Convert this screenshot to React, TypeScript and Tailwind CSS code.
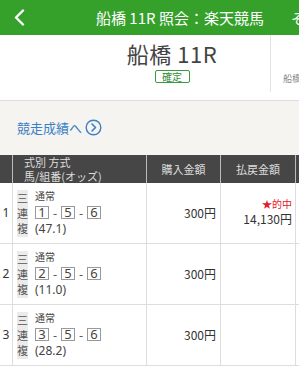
import React from "react";

const font = { fontFamily: '"Noto Sans CJK JP", "Noto Sans", sans-serif' };
const digit = { fontFamily: '"Noto Sans", "Noto Sans CJK JP", sans-serif' };

function NumBox({ n }: { n: string }) {
  return (
    <span
      className="inline-flex items-center justify-center w-[14px] h-[13px] border border-[#999] text-[13px] leading-[11px] text-[#444] bg-white"
      style={digit}
    >
      {n}
    </span>
  );
}

function Row({ idx, nums, odds, hit }: { idx: string; nums: string[]; odds: string; hit?: boolean }) {
  return (
    <div className="flex h-[61px] border-b border-[#ddd] bg-white">
      <div className="w-[13px] shrink-0 border-r border-[#ddd] flex items-center justify-center text-[12px] leading-[14px] text-[#333]" style={digit}>
        {idx}
      </div>
      <div className="w-[134px] shrink-0 border-r border-[#ddd] flex items-center pl-[4px]">
        <div className="w-[11px] bg-[#ebebeb] flex flex-col items-center text-[11px] leading-[15px] text-[#555] py-[1px]">
          <span className="block">三</span>
          <span className="block">連</span>
          <span className="block">複</span>
        </div>
        <div className="ml-[7px] flex flex-col">
          <span className="block text-[10px] leading-[12px] text-[#444]">通常</span>
          <div className="flex items-center mt-[4px] text-[12px] leading-[13px] text-[#444]">
            <NumBox n={nums[0]} />
            <span className="block w-[12px] text-center">-</span>
            <NumBox n={nums[1]} />
            <span className="block w-[12px] text-center">-</span>
            <NumBox n={nums[2]} />
          </div>
          <span className="block text-[12px] leading-[14px] mt-[3px] text-[#444]" style={digit}>{odds}</span>
        </div>
      </div>
      <div className="w-[74px] shrink-0 border-r border-[#ddd] flex items-center justify-end pr-[4px] text-[12px] leading-[14px] text-[#333]">
        300円
      </div>
      <div className="w-[75px] shrink-0 border-r border-[#ddd] flex flex-col items-end justify-center pr-[3px] pb-[2px]">
        {hit && (
          <>
            <span className="block text-[10px] leading-[14px] text-[#e0202a]">★的中</span>
            <span className="block text-[12px] leading-[16px] text-[#333]">14,130円</span>
          </>
        )}
      </div>
      <div className="w-[20px] shrink-0" />
    </div>
  );
}

export default function App() {
  return (
    <div className="w-[299px] h-[367px] overflow-hidden bg-white" style={font}>
      {/* header */}
      <div className="relative h-[35px] bg-[#35a12b] overflow-hidden">
        <svg className="absolute left-[13px] top-[9px]" width="12" height="17" viewBox="0 0 12 17">
          <path d="M10 1.5 L3 8.5 L10 15.5" fill="none" stroke="white" strokeWidth="2.4" strokeLinecap="round" strokeLinejoin="round" />
        </svg>
        <div className="absolute left-[96px] top-0 h-[35px] flex items-center text-white text-[15px] leading-[18px] whitespace-nowrap">
          船橋 11R 照会：楽天競馬
        </div>
        <div className="absolute left-[291px] top-0 h-[35px] flex items-center text-white text-[14px] leading-[18px] whitespace-nowrap">
          その他
        </div>
      </div>

      {/* race title section */}
      <div className="flex h-[66px] bg-white border-b border-[#ddd] overflow-hidden">
        <div className="w-[271px] shrink-0 h-[57px] border-r border-[#e2e2e2] flex flex-col items-center pl-[74px]">
          <div className="text-[22px] leading-[26px] mt-[5px] text-[#444] tracking-[0.5px]">船橋 11R</div>
          <div className="mt-[4px] border border-[#3a9a3f] rounded-[2px] w-[35px] h-[13px] flex items-center justify-center text-[10px] text-[#2f8a35] leading-[11px]">
            確定
          </div>
        </div>
        <div className="pl-[12px] pt-[39px] text-[9px] leading-[10px] text-[#888] whitespace-nowrap">船橋</div>
      </div>

      {/* link section */}
      <div className="h-[54px] bg-[#f5f4f0] flex items-center pl-[17px] pb-[1px]">
        <span className="text-[13px] text-[#3b7fc6] leading-[16px]">競走成績へ</span>
        <svg className="ml-[3px]" width="17" height="17" viewBox="0 0 17 17">
          <circle cx="8.5" cy="8.5" r="7.3" fill="none" stroke="#3b7fc6" strokeWidth="1.4" />
          <path d="M7 5 L10.5 8.5 L7 12" fill="none" stroke="#3b7fc6" strokeWidth="1.6" strokeLinecap="round" strokeLinejoin="round" />
        </svg>
      </div>

      {/* table header */}
      <div className="flex h-[28px] bg-[#464646] text-[#ddd]">
        <div className="w-[13px] shrink-0 border-r border-[#bbb]" />
        <div className="w-[134px] shrink-0 border-r border-[#bbb] flex flex-col justify-center pl-[11px] text-[11px] leading-[14px]">
          <span className="block">式別 方式</span>
          <span className="block">馬/組番(オッズ)</span>
        </div>
        <div className="w-[74px] shrink-0 border-r border-[#bbb] flex items-center justify-center text-[11px] leading-[14px]">
          購入金額
        </div>
        <div className="w-[75px] shrink-0 border-r border-[#bbb] flex items-center justify-center text-[11px] leading-[14px]">
          払戻金額
        </div>
        <div className="w-[20px] shrink-0" />
      </div>

      <Row idx="1" nums={["1", "5", "6"]} odds="(47.1)" hit />
      <Row idx="2" nums={["2", "5", "6"]} odds="(11.0)" />
      <Row idx="3" nums={["3", "5", "6"]} odds="(28.2)" />
    </div>
  );
}
